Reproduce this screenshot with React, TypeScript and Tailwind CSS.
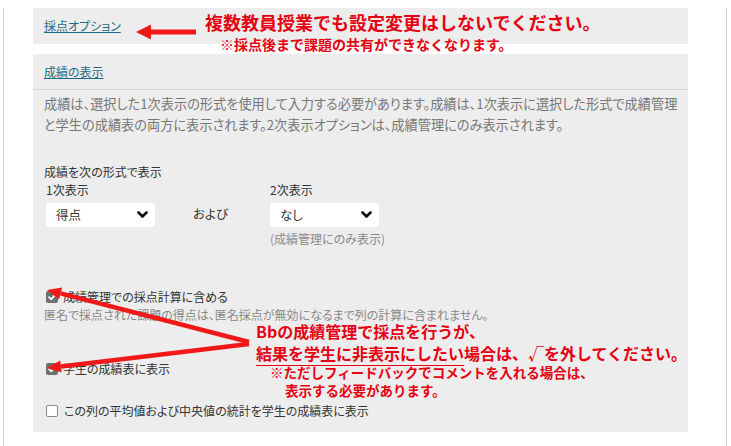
import React from "react";

const jp = { fontFamily: '"Noto Sans CJK JP", "Noto Sans", sans-serif' };

function Chevron() {
  return (
    <svg width="11" height="8" viewBox="0 0 11 8" className="shrink-0">
      <polyline points="1.5,1.5 5.5,5.5 9.5,1.5" fill="none" stroke="#111" strokeWidth="2.6" strokeLinecap="round" strokeLinejoin="round" />
    </svg>
  );
}

function Select({ value }: { value: string }) {
  return (
    <div className="flex h-[24px] w-[109px] items-center justify-between rounded-[3px] bg-white pl-[10px] pr-[7px] text-[12.5px] text-[#333]">
      <span>{value}</span>
      <Chevron />
    </div>
  );
}

function CheckedBox() {
  return (
    <div className="flex h-[12px] w-[12px] shrink-0 items-center justify-center rounded-[2px] bg-[#6f6f6f]">
      <svg width="10" height="10" viewBox="0 0 10 10">
        <polyline points="2,5.2 4.2,7.4 8.2,2.6" fill="none" stroke="#fff" strokeWidth="1.7" strokeLinecap="round" strokeLinejoin="round" />
      </svg>
    </div>
  );
}

function EmptyBox() {
  return <div className="h-[12px] w-[12px] shrink-0 rounded-[2px] border border-[#8a8a8a] bg-white" />;
}

export default function App() {
  return (
    <div className="relative h-[446px] w-[731px] overflow-hidden bg-white [font-feature-settings:'palt']" style={jp}>
      <div className="ml-[3px] h-[446px] w-[724px] border-l border-r border-[#cfcfcf] pl-[29px]">
        {/* Panel 1 */}
        <div className="mt-[8px] flex h-[36px] w-[655px] items-center bg-[#ededed] pl-[11px]">
          <span className="text-[12px] leading-[18px] text-[#1f6a87] underline">採点オプション</span>
        </div>
        {/* Panel 2 */}
        <div className="mt-[10px] h-[378px] w-[655px] bg-[#ededed]">
          <div className="flex h-[36px] items-center border-b border-[#d6d6d6] pl-[11px]">
            <span className="text-[12px] leading-[18px] text-[#1f6a87] underline">成績の表示</span>
          </div>
          <div className="pl-[11px] pt-[3px]">
            <p className="whitespace-nowrap text-[13.2px] leading-[21px] text-[#777]">
              成績は、選択した1次表示の形式を使用して入力する必要があります。成績は、1次表示に選択した形式で成績管理
              <br />
              と学生の成績表の両方に表示されます。2次表示オプションは、成績管理にのみ表示されます。
            </p>
            <div className="mt-[28px] text-[12px] leading-[18px] text-[#333]">成績を次の形式で表示</div>
            <div className="flex pl-[2px]">
              <div className="flex flex-col">
                <div className="text-[12px] leading-[18px] text-[#333]">1次表示</div>
                <div className="mt-[4px]">
                  <Select value="得点" />
                </div>
              </div>
              <div className="ml-[38px] mt-[24px] text-[12.5px] leading-[18px] text-[#333]">および</div>
              <div className="ml-[42px] flex flex-col">
                <div className="text-[12px] leading-[18px] text-[#333]">2次表示</div>
                <div className="mt-[4px]">
                  <Select value="なし" />
                </div>
                <div className="mt-[3px] text-[12px] leading-[18px] text-[#888]">(成績管理にのみ表示)</div>
              </div>
            </div>
            <div className="mt-[40px] flex items-center gap-[5px] pl-[2px]">
              <CheckedBox />
              <span className="text-[12px] leading-[18px] text-[#333]">成績管理での採点計算に含める</span>
            </div>
            <div className="text-[12px] leading-[18px] text-[#888]">
              匿名で採点された課題の得点は、匿名採点が無効になるまで列の計算に含まれません。
            </div>
            <div className="mt-[36px] flex items-center gap-[5px] pl-[2px]">
              <CheckedBox />
              <span className="text-[12px] leading-[18px] text-[#333]">学生の成績表に表示</span>
            </div>
            <div className="mt-[24px] flex items-center gap-[6px] pl-[2px]">
              <EmptyBox />
              <span className="text-[12px] leading-[18px] text-[#333]">この列の平均値および中央値の統計を学生の成績表に表示</span>
            </div>
          </div>
        </div>
      </div>

      {/* Annotations */}
      <div className="absolute left-[205px] top-[12px] whitespace-nowrap text-[18px] font-bold leading-[20px] text-[#e60012] [font-feature-settings:normal]">
        複数教員授業でも設定変更はしないでください。
      </div>
      <div className="absolute left-[220px] top-[35px] whitespace-nowrap text-[14px] font-bold leading-[18px] text-[#e60012] [font-feature-settings:normal]">
        ※採点後まで課題の共有ができなくなります。
      </div>

      <div className="absolute left-[256px] top-[320px] whitespace-nowrap font-bold text-[#e60012] [font-feature-settings:normal]">
        <div className="text-[16px] leading-[22px]">Bbの成績管理で採点を行うが、</div>
        <div className="text-[16px] leading-[22px]">
          <span className="border-b-[1.5px] border-[#e60012]">結果を学生に非表示にしたい</span>場合は、√を外してください。
        </div>
        <div className="ml-[14px] text-[13.5px] leading-[17px]">※ただしフィードバックでコメントを入れる場合は、</div>
        <div className="ml-[29px] text-[13.5px] leading-[18px]">表示する必要があります。</div>
      </div>

      <svg className="pointer-events-none absolute left-0 top-0" width="731" height="446" viewBox="0 0 731 446">
        <line x1="196" y1="32" x2="148" y2="32" stroke="#f01818" strokeWidth="5" />
        <polygon points="136,32 151,24.5 151,39.5" fill="#f01818" />
        <line x1="249" y1="342" x2="60.6" y2="293.4" stroke="#f01818" strokeWidth="4.5" />
        <polygon points="47,290 62.1,287.6 59.1,299.2" fill="#f01818" />
        <line x1="249" y1="344" x2="60.9" y2="366.4" stroke="#f01818" strokeWidth="4.5" />
        <polygon points="47,368 61.6,372.4 60.2,360.4" fill="#f01818" />
      </svg>
    </div>
  );
}
